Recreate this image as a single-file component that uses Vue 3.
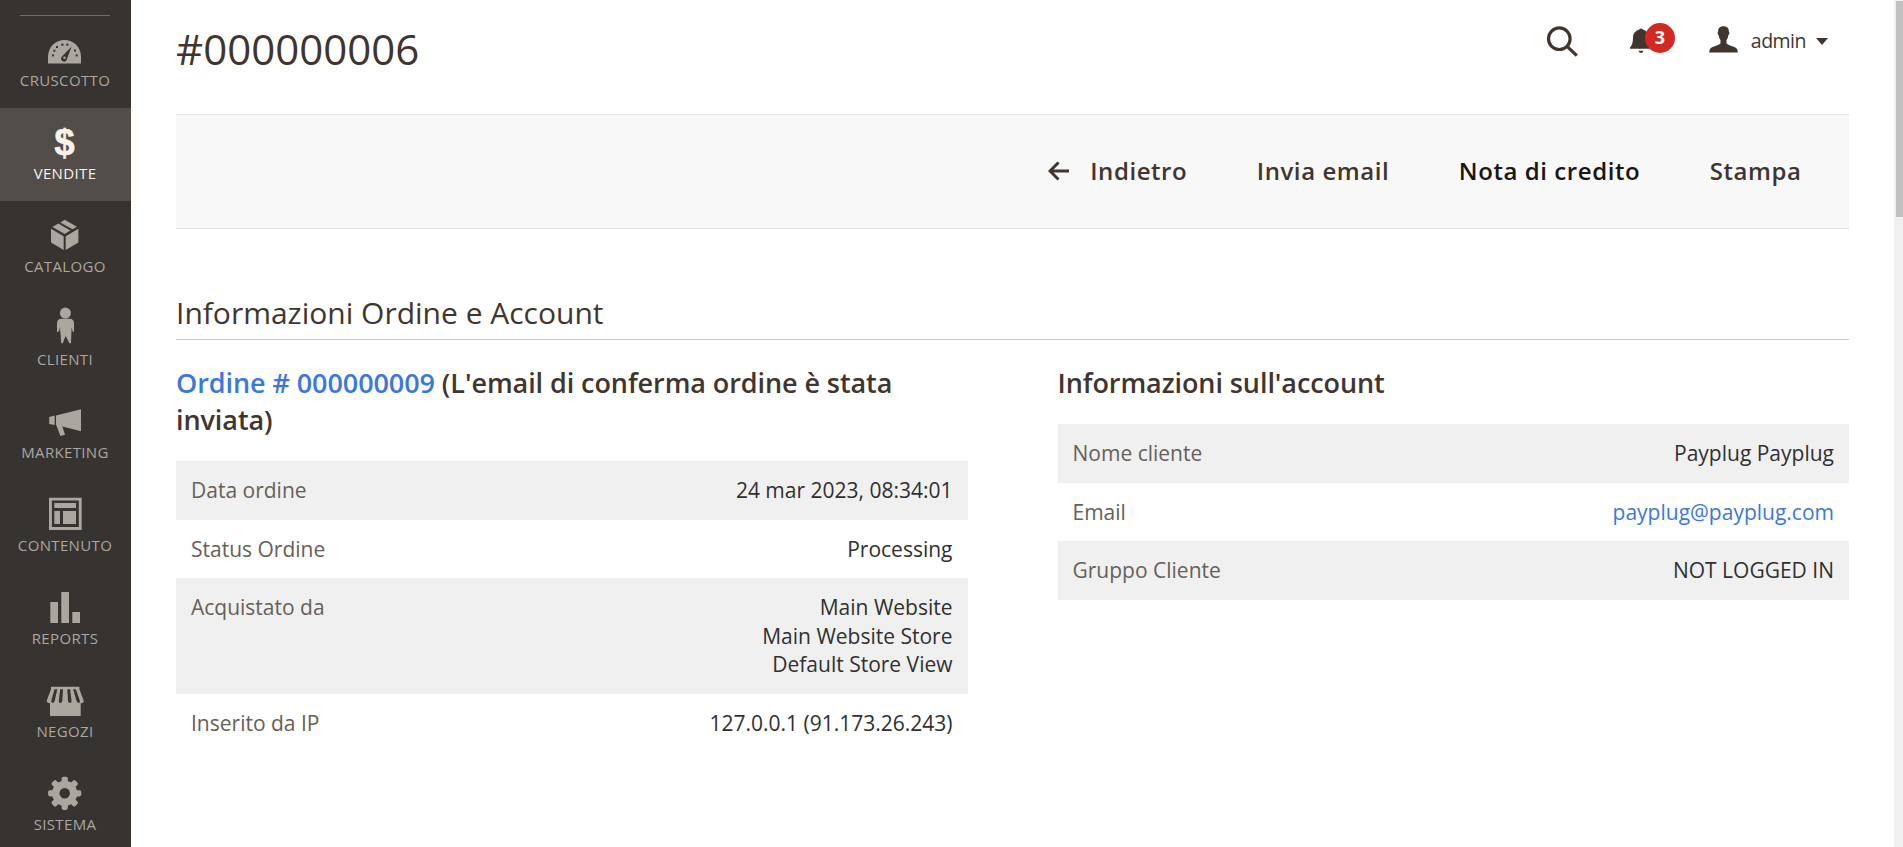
<template>
  <div class="page">
    <nav class="sidebar">
      <div class="divider"></div>
      <a v-for="item in menu" :key="item.id" class="menu-item" :class="{ active: item.id === current }" @click="current = item.id">
        <svg class="menu-icon" viewBox="0 0 45 43">
          <template v-if="item.id === 'dashboard'">
            <path d="M5 36.5V29.5a16.5 16.5 0 0 1 33 0v7z" />
            <g class="cut">
              <rect x="9" y="27.4" width="2" height="2" />
              <rect x="10.4" y="22.7" width="2" height="2" />
              <rect x="13" y="19" width="2" height="2" />
              <rect x="18.3" y="16.7" width="2.2" height="2" />
              <rect x="23.3" y="16.7" width="2.2" height="2" />
              <rect x="31" y="22.5" width="2" height="2" />
              <rect x="32.7" y="27.4" width="2" height="2" />
              <path d="M28.6 19.6L19 29.4a3 3 0 1 0 5 2.4z" />
            </g>
            <circle cx="21.5" cy="30.8" r="1.3" />
          </template>
          <text v-else-if="item.id === 'sales'" class="dollar" x="21.5" y="34.5">$</text>
          <template v-else-if="item.id === 'catalog'">
            <path d="M8 15.7l12.7 7.6V37L8 29.6zM35.4 15.7l-12.7 7.6V37l12.7-7.4z" />
            <path d="M21.7 6.7l12.2 7-4.4 2.6L17.3 9.4zM15.3 10.6l12.1 7-5.7 3.5-12.2-7.1z" />
          </template>
          <template v-else-if="item.id === 'customers'">
            <circle cx="22.4" cy="7.1" r="5.5" />
            <path d="M18.5 12.8h8q4.5 0 4.5 4.6v8.9l-1.4-1-1-4-.6 16h-1.6L22.6 30l-2.8 7.3h-1.6l-1.2-16-1 4-2 1v-8.9q0-4.6 4.5-4.6z" />
          </template>
          <path v-else-if="item.id === 'marketing'" d="M13 16.5l25-6.2v22L19.4 27.5l2.6 8.2-4.6 1.3-4.4-11.6zM6.2 18l5.5-1.4v9.4l-5.5-1z" />
          <template v-else-if="item.id === 'content'">
            <path fill-rule="evenodd" d="M6 5.7h32.7V38H6zM8.9 8.6v26.5h26.9V8.6z" />
            <path d="M11.3 11H33v5H11.3zM11.3 19H17v13h-5.7zM20 19h13v13H20z" />
          </template>
          <path v-else-if="item.id === 'reports'" d="M7.3 17H15v21H7.3zM18.3 7H26v31h-7.7zM29.3 27H37v11h-7.7z" />
          <template v-else-if="item.id === 'stores'">
            <path d="M8 8.7h28.4v2.5l4.3 11.5q.2 2.3-3 2.5V38H7V25.2q-3.3-.2-3.3-2.5L8 11.2z" />
            <path class="cut" d="M11.5 11.2h2.8l-2.5 11q-.6 3.2-2.2 2.6-2-.5-1.2-2.6zM17.2 11.2h2.8l-.7 11.5q-.3 2.3-2 2.3t-1.5-2.3zM24.3 11.2h2.8l1.4 11.5q.2 2.3-1.5 2.3t-2-2.3zM30.2 11.2h2.6l4 11.3q.6 2.2-1 2.4t-2.4-2.4z" />
          </template>
          <g v-else-if="item.id === 'system'">
            <rect v-for="n in 4" :key="n" x="18.6" y="5.7" width="6.2" height="33.2" rx="1.8" :transform="`rotate(${n * 45} 21.7 22.3)`" />
            <circle cx="21.7" cy="22.3" r="12.6" />
            <circle class="cut" cx="21.7" cy="22.3" r="5.2" />
          </g>
        </svg>
        <span class="menu-label">{{ item.label }}</span>
      </a>
    </nav>

    <main class="content">
      <header class="page-header">
        <h1>#000000006</h1>
        <div class="tools">
          <svg class="search" viewBox="0 0 32 32">
            <circle cx="13.3" cy="12.7" r="10.8" />
            <path d="M20.8 20.2l10 9.5" />
          </svg>
          <div class="notifications">
            <svg class="bell" viewBox="0 0 22 26">
              <path d="M9.2 1.4q1.8-2 3.6 0Q19 3.3 19 9.5q0 7 3 10v1.3H0v-1.3q3-3 3-10Q3 3.3 9.2 1.4zM8.5 22.7h5q-.7 2.3-2.5 2.3t-2.5-2.3z" />
            </svg>
            <span class="badge">3</span>
          </div>
          <div class="user">
            <svg class="avatar" viewBox="0 0 29 27">
              <path d="M14.5.2c4 0 5.6 2.3 5.4 5.6.9.7.5 2.8-.6 3.5-.2 2.4-1 3.8-1.8 4.7v3.2c1.8 2.2 6.8 2.9 9.3 4.5 1.7 1.1 1.9 3 1.9 4.7H.3c0-1.7.2-3.6 1.9-4.7 2.5-1.6 7.5-2.3 9.3-4.5V14c-.8-.9-1.6-2.3-1.8-4.7-1.1-.7-1.5-2.8-.6-3.5C8.9 2.5 10.5.2 14.5.2z" />
            </svg>
            <span class="user-name">admin</span>
            <svg class="caret" viewBox="0 0 12 7"><path d="M0 0h12L6 7z" /></svg>
          </div>
        </div>
      </header>

      <div class="action-bar">
        <button class="action back">
          <svg class="arrow" viewBox="0 0 22 20">
            <path d="M21 10H3M10.5 1.5L2 10l8.5 8.5" />
          </svg>
          <span>Indietro</span>
        </button>
        <button class="action">Invia email</button>
        <button class="action hovered">Nota di credito</button>
        <button class="action">Stampa</button>
      </div>

      <h2>Informazioni Ordine e Account</h2>

      <div class="columns">
        <section class="column">
          <h3><a class="link">Ordine # 000000009</a> (L'email di conferma ordine è stata inviata)</h3>
          <dl>
            <div v-for="row in orderRows" :key="row.label" class="row">
              <dt>{{ row.label }}</dt>
              <dd><div v-for="line in row.lines" :key="line">{{ line }}</div></dd>
            </div>
          </dl>
        </section>
        <section class="column">
          <h3>Informazioni sull'account</h3>
          <dl>
            <div v-for="row in accountRows" :key="row.label" class="row">
              <dt>{{ row.label }}</dt>
              <dd><span :class="{ link: row.link }">{{ row.value }}</span></dd>
            </div>
          </dl>
        </section>
      </div>
    </main>

    <div class="scrollbar"><div class="thumb"></div></div>
  </div>
</template>

<script setup>
import { ref } from 'vue';

const current = ref('sales');

const menu = [
  { id: 'dashboard', label: 'CRUSCOTTO' },
  { id: 'sales', label: 'VENDITE' },
  { id: 'catalog', label: 'CATALOGO' },
  { id: 'customers', label: 'CLIENTI' },
  { id: 'marketing', label: 'MARKETING' },
  { id: 'content', label: 'CONTENUTO' },
  { id: 'reports', label: 'REPORTS' },
  { id: 'stores', label: 'NEGOZI' },
  { id: 'system', label: 'SISTEMA' }
];

const orderRows = [
  { label: 'Data ordine', lines: ['24 mar 2023, 08:34:01'] },
  { label: 'Status Ordine', lines: ['Processing'] },
  { label: 'Acquistato da', lines: ['Main Website', 'Main Website Store', 'Default Store View'] },
  { label: 'Inserito da IP', lines: ['127.0.0.1 (91.173.26.243)'] }
];

const accountRows = [
  { label: 'Nome cliente', value: 'Payplug Payplug' },
  { label: 'Email', value: 'payplug@payplug.com', link: true },
  { label: 'Gruppo Cliente', value: 'NOT LOGGED IN' }
];
</script>

<style>
body {
  margin: 0;
  overflow: hidden;
}
</style>

<style scoped>
.page {
  display: flex;
  height: 847px;
  overflow: hidden;
  background: #fff;
  color: #41362f;
  font-family: "Open Sans", "Noto Sans", sans-serif;
  font-size: 21px;
  line-height: 1.36;
}

.sidebar {
  flex: 0 0 131px;
  background: #373330;
}

.divider {
  height: 1px;
  margin: 15px 21px -1px 20px;
  background: #736963;
}

.menu-item {
  display: flex;
  flex-direction: column;
  align-items: center;
  box-sizing: border-box;
  height: 93px;
  padding-top: 12px;
  color: #aaa6a0;
  fill: #aaa6a0;
  cursor: pointer;
}

.menu-item.active {
  background: #524d49;
  color: #f7f3eb;
  fill: #f7f3eb;
}

.menu-icon {
  width: 45px;
  height: 43px;
}

.cut {
  fill: #373330;
}

.dollar {
  font-family: "Liberation Sans", sans-serif;
  font-size: 36px;
  font-weight: 700;
  text-anchor: middle;
  stroke: #f7f3eb;
  stroke-width: 0.7;
}

.menu-label {
  padding-right: 1px;
  font-size: 15px;
  line-height: 20px;
  letter-spacing: 0.35px;
}

.active .menu-label {
  font-weight: 500;
}

.content {
  flex: 1;
  padding: 0 45px;
}

.page-header {
  display: flex;
  justify-content: space-between;
  height: 114px;
}

h1 {
  margin: 20px 0 0;
  font-size: 42px;
  font-weight: 400;
  line-height: 57px;
}

.tools {
  display: flex;
  align-items: flex-start;
  padding: 23px 21px 0 0;
}

.search {
  width: 32px;
  height: 32px;
  margin: 3px 52px 0 0;
  fill: none;
  stroke: #41362f;
  stroke-width: 3.2;
}

.notifications {
  position: relative;
  width: 46px;
  height: 32px;
  margin-right: 33px;
}

.bell {
  width: 22px;
  height: 26px;
  margin-top: 5px;
  fill: #41362f;
}

.badge {
  position: absolute;
  top: 0;
  left: 15px;
  width: 30px;
  height: 30px;
  border-radius: 50%;
  background: #d42822;
  color: #fff;
  font-size: 18px;
  font-weight: 700;
  line-height: 29px;
  text-align: center;
}

.user {
  display: flex;
}

.avatar {
  width: 29px;
  height: 27px;
  margin: 3px 13px 0 0;
  fill: #41362f;
}

.user-name {
  margin-right: 10px;
  font-size: 19.5px;
  line-height: 35px;
  letter-spacing: -0.5px;
}

.caret {
  width: 12px;
  height: 7px;
  margin-top: 15px;
  fill: #41362f;
}

.action-bar {
  display: flex;
  justify-content: flex-end;
  align-items: center;
  gap: 69.5px;
  box-sizing: border-box;
  height: 115px;
  padding: 0 47.5px 2px 0;
  border-top: 1px solid #e3e3e3;
  border-bottom: 1px solid #e3e3e3;
  background: #f8f8f8;
}

.action {
  display: flex;
  align-items: center;
  padding: 0;
  border: 0;
  background: none;
  color: #41362f;
  font-family: inherit;
  font-size: 24px;
  font-weight: 600;
  letter-spacing: 0.57px;
  cursor: pointer;
}

.action.hovered {
  color: #1a1612;
}

.arrow {
  width: 22px;
  height: 20px;
  margin-right: 20px;
  fill: none;
  stroke: #41362f;
  stroke-width: 3;
}

h2 {
  box-sizing: border-box;
  height: 48px;
  margin: 63px 0 24px;
  border-bottom: 1px solid #ccc;
  font-size: 30px;
  font-weight: 400;
  line-height: 41px;
}

.columns {
  display: flex;
  gap: 90px;
}

.column {
  flex: 1;
}

h3 {
  margin: 0 0 23.2px;
  font-size: 27px;
  font-weight: 600;
  line-height: 37px;
  letter-spacing: -0.08px;
}

dl {
  margin: 0;
}

.row {
  display: flex;
  justify-content: space-between;
  padding: 15px;
}

.row:nth-child(odd) {
  background: #f0f0f0;
}

dt {
  color: #666059;
}

dd {
  margin: 0;
  color: #303030;
  text-align: right;
}

.link {
  color: #3c78dc;
}

.scrollbar {
  flex: 0 0 7px;
  padding: 1px 0 0 2px;
  background: #f0f0f0;
}

.thumb {
  height: 216px;
  background: #c1c1c1;
}
</style>
